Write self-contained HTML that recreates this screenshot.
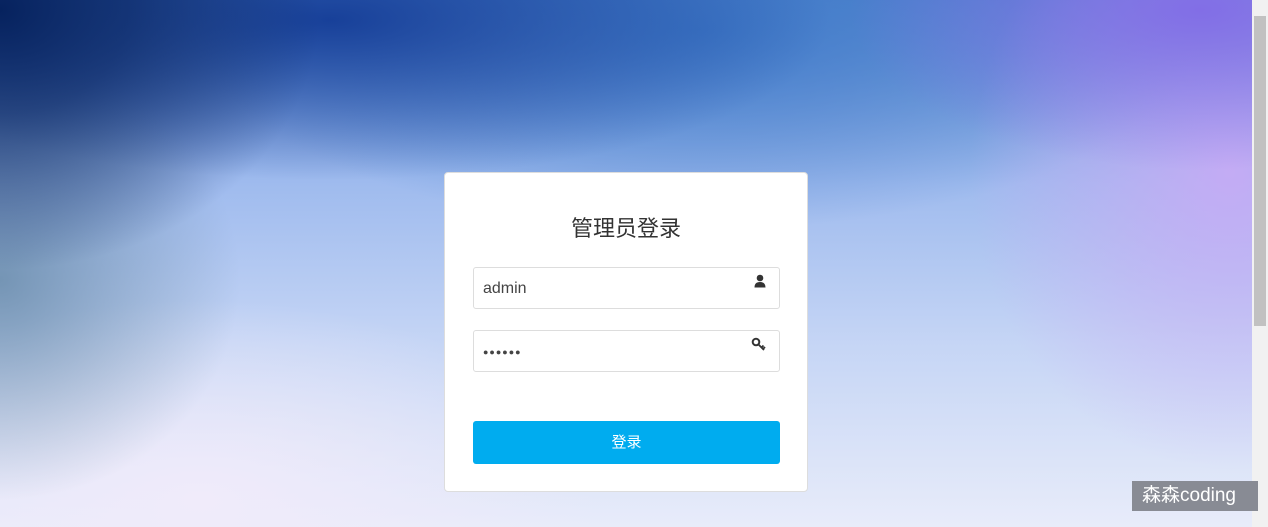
<!DOCTYPE html>
<html><head><meta charset="utf-8"><style>
*{margin:0;padding:0;box-sizing:border-box}
body{width:1268px;height:527px;overflow:hidden;position:relative;font-family:"Liberation Sans","Noto Sans CJK SC",sans-serif;
background:
radial-gradient(ellipse 320px 260px at 0px 10px,#06225e 0%,rgba(6,34,94,0.7) 40%,rgba(6,34,94,0) 100%),
radial-gradient(ellipse 240px 220px at 0px 280px,rgba(100,135,165,0.8) 0%,rgba(100,135,165,0) 100%),
radial-gradient(ellipse 500px 160px at 330px 20px,rgba(20,60,150,0.95) 0%,rgba(20,60,150,0) 100%),
radial-gradient(ellipse 350px 160px at 1200px 10px,rgba(130,110,230,1) 0%,rgba(130,110,230,0) 100%),
radial-gradient(ellipse 260px 300px at 1230px 170px,rgba(200,170,245,0.9) 0%,rgba(200,170,245,0) 100%),
radial-gradient(ellipse 500px 200px at 700px 30px,rgba(60,120,200,0.9) 0%,rgba(60,120,200,0) 100%),
radial-gradient(ellipse 400px 200px at 200px 500px,rgba(240,235,250,1) 0%,rgba(240,235,250,0) 100%),
linear-gradient(180deg,#5a8ad0 0%,#9fbbee 35%,#c5d5f5 65%,#e8ecfa 100%);}
.sb{position:absolute;left:1252px;top:0;width:16px;height:527px;background:#f1f1f1}
.thumb{position:absolute;left:1254px;top:16px;width:12px;height:310px;background:#c1c1c1}
.card{position:absolute;left:444px;top:172px;width:364px;height:320px;background:#fff;border:1px solid #ddd;border-radius:4px}
h1{position:absolute;left:0;right:0;top:38px;text-align:center;font-size:22px;font-weight:normal;color:#333}
.in{position:absolute;left:28px;width:307px;height:42px;border:1px solid #ddd;border-radius:3px;font-size:16px;color:#444;padding:12px 9px}
.btn{position:absolute;left:28px;top:248px;width:307px;height:43px;background:#00acef;border-radius:3px;color:#fff;text-align:center;line-height:43px;font-size:15px}
.wm{position:absolute;left:1132px;top:481px;width:126px;height:30px;background:#888b94;color:#fff;font-size:19px;line-height:30px;padding-left:10px}
</style></head><body>
<div class="card">
<h1>管理员登录</h1>
<div class="in" style="top:94px">admin
<svg style="position:absolute;right:13px;top:6px" width="12" height="14" viewBox="0 0 12 14"><circle cx="6" cy="4" r="3.3" fill="#333"/><path d="M0.5 13.5 Q0.5 8 6 8 Q11.5 8 11.5 13.5Z" fill="#333"/></svg></div>
<div class="in" style="top:157px;letter-spacing:1px;font-size:9px;padding-top:16px">●●●●●●
<svg style="position:absolute;right:12px;top:6px" width="16" height="14" viewBox="0 0 16 14"><circle cx="5" cy="5" r="3.3" fill="none" stroke="#333" stroke-width="2"/><path d="M7.5 7.5 L13 13 M10.5 10.5 L12.5 8.5 M12 12 L14 10" stroke="#333" stroke-width="1.8" fill="none"/></svg></div>
<div class="btn">登录</div>
</div>
<div class="sb"></div><div class="thumb"></div>
<div class="wm">森森coding</div>
</body></html>
